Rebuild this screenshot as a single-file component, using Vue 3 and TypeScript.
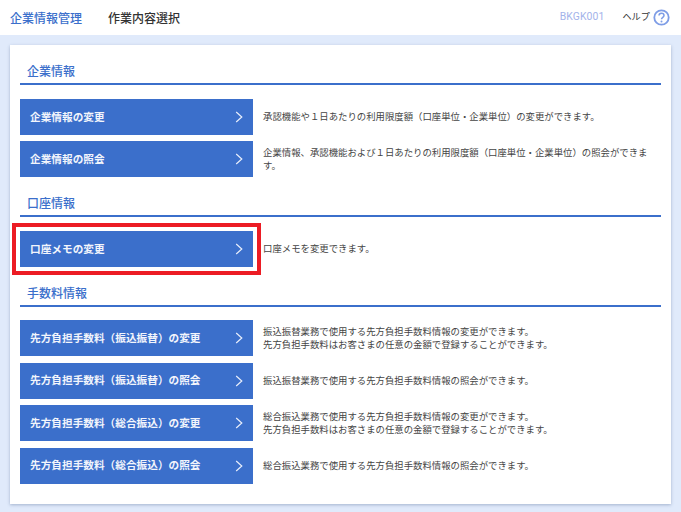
<script setup lang="ts">
interface Item { label: string; desc: string[]; highlight?: boolean }
interface Section { title: string; items: Item[]; cls: string }
const sections: Section[] = [
  { title: '企業情報', cls: 's1', items: [
    { label: '企業情報の変更', desc: ['承認機能や１日あたりの利用限度額（口座単位・企業単位）の変更ができます。'] },
    { label: '企業情報の照会', desc: ['企業情報、承認機能および１日あたりの利用限度額（口座単位・企業単位）の照会ができま', 'す。'] },
  ]},
  { title: '口座情報', cls: 's2', items: [
    { label: '口座メモの変更', desc: ['口座メモを変更できます。'], highlight: true },
  ]},
  { title: '手数料情報', cls: 's3', items: [
    { label: '先方負担手数料（振込振替）の変更', desc: ['振込振替業務で使用する先方負担手数料情報の変更ができます。', '先方負担手数料はお客さまの任意の金額で登録することができます。'] },
    { label: '先方負担手数料（振込振替）の照会', desc: ['振込振替業務で使用する先方負担手数料情報の照会ができます。'] },
    { label: '先方負担手数料（総合振込）の変更', desc: ['総合振込業務で使用する先方負担手数料情報の変更ができます。', '先方負担手数料はお客さまの任意の金額で登録することができます。'] },
    { label: '先方負担手数料（総合振込）の照会', desc: ['総合振込業務で使用する先方負担手数料情報の照会ができます。'] },
  ]},
]
</script>

<template>
  <div class="page">
    <header class="top">
      <span class="crumb-a">企業情報管理</span>
      <span class="crumb-b">作業内容選択</span>
      <span class="code">BKGK001</span>
      <span class="help">ヘルプ</span>
      <svg class="help-icon" width="17" height="17" viewBox="0 0 17 17">
        <circle cx="8.5" cy="8.5" r="7.2" fill="#fff" stroke="#7e9de6" stroke-width="1.8" />
        <path d="M6 6.6c0-1.5 1.1-2.4 2.5-2.4s2.5.9 2.5 2.2c0 1.9-2.5 1.9-2.5 3.9" fill="none" stroke="#7e9de6" stroke-width="1.5" />
        <circle cx="8.5" cy="12.4" r="1" fill="#7e9de6" />
      </svg>
    </header>
    <main class="card">
      <section v-for="s in sections" :key="s.title" :class="['section', s.cls]">
        <h2 class="heading">{{ s.title }}</h2>
        <div class="rows">
          <div v-for="it in s.items" :key="it.label" :class="['row', { hl: it.highlight }]">
            <div class="btn-wrap">
              <div class="btn">
                <span class="btn-label">{{ it.label }}</span>
                <svg width="9" height="12" viewBox="0 0 9 12"><path d="M1.2 1l5.6 5-5.6 5" fill="none" stroke="#e8eefb" stroke-width="1.2" /></svg>
              </div>
            </div>
            <div class="desc"><div v-for="l in it.desc" :key="l">{{ l }}</div></div>
          </div>
        </div>
      </section>
    </main>
  </div>
</template>

<style>
html, body { margin: 0; background: #e0eafb; }
</style>

<style scoped>
.page {
  width: 681px;
  height: 512px;
  overflow: hidden;
  background: #e0eafb;
  font-family: "Noto Sans CJK JP", "Noto Sans", sans-serif;
}
.top {
  height: 35px;
  background: #fff;
  display: flex;
  align-items: center;
  padding: 0 11px 0 10px;
  box-sizing: border-box;
}
.crumb-a { font-size: 12px; color: #3b6fcb; font-weight: 500; }
.crumb-b { font-size: 12px; color: #333; font-weight: 500; margin-left: 26px; }
.code { margin-left: auto; font-size: 10.4px; color: #a3b3ea; font-family: Roboto, sans-serif; letter-spacing: 0.1px; margin-top: -3px; }
.help { font-size: 9.2px; color: #333; margin-left: 18px; margin-top: -3px; }
.help-icon { margin-left: 3px; margin-top: -1px; }
.card {
  margin: 10px 10px 0;
  width: 661px;
  height: 459px;
  box-sizing: border-box;
  background: #fff;
  padding: 0 10px;
  box-shadow: 0 1px 3px rgba(90, 110, 150, 0.45);
}
.heading {
  margin: 0;
  height: 19px;
  line-height: 14px;
  padding-left: 7px;
  font-size: 12px;
  font-weight: 500;
  color: #3b6fcb;
  border-bottom: 2px solid #3b6fcb;
}
.section { padding-top: 19px; }
.rows { display: flex; flex-direction: column; gap: 6px; padding-top: 14px; }
.s3 .rows { gap: 6.67px; padding-top: 13px; }
.row { display: flex; align-items: center; height: 36px; }
.btn-wrap { flex: none; }
.btn {
  width: 233px;
  height: 36px;
  box-sizing: border-box;
  padding: 0 10px 2px;
  display: flex;
  align-items: center;
  justify-content: space-between;
  background: #3b6fcb;
  color: #f2f5fc;
  font-size: 10.67px;
  font-weight: 700;
}
.btn svg { margin-right: -1px; flex: none; position: relative; top: 1px; }
.hl .btn-wrap { outline: 4px solid #ec1c24; outline-offset: 4px; }
.desc {
  margin-left: 10px;
  padding-bottom: 1px;
  font-size: 9.4px;
  line-height: 13px;
  color: #444;
  width: 390px;
}
</style>
